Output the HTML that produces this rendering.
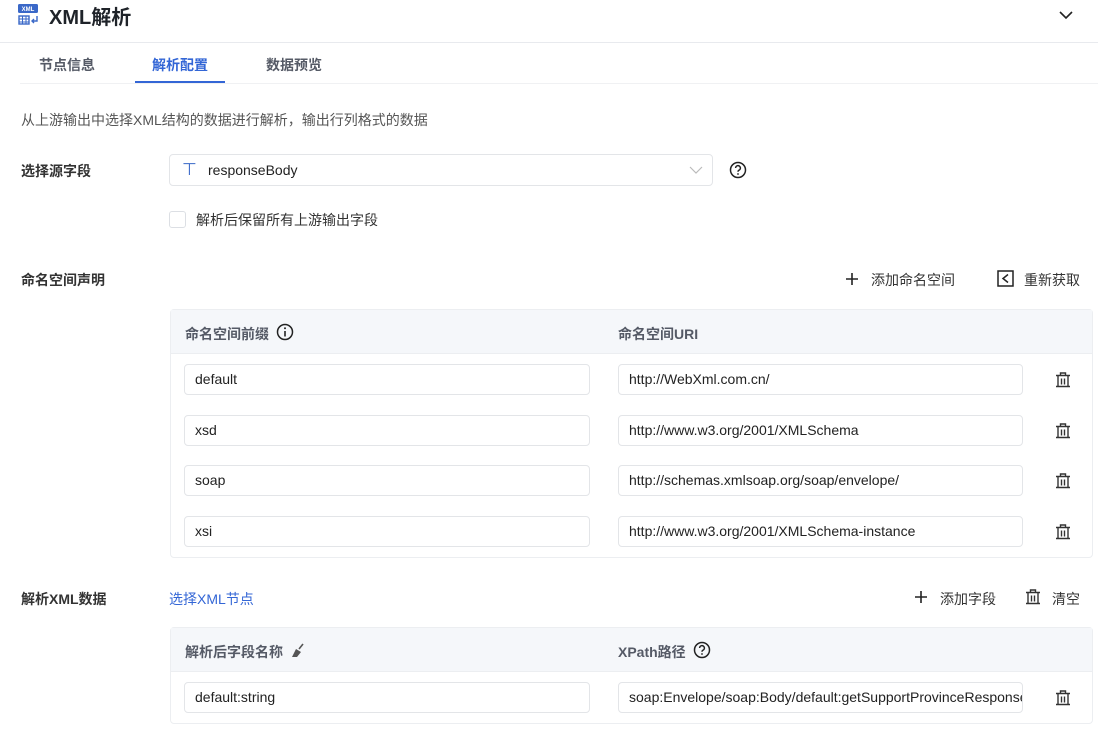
<!DOCTYPE html>
<html><head><meta charset="utf-8"><style>
*{box-sizing:border-box;margin:0;padding:0}
body{width:1098px;height:729px;overflow:hidden;background:#fff;font-family:"Liberation Sans","Noto Sans CJK SC",sans-serif;color:#1f2329;position:relative}
.a{position:absolute}
.t{font-size:14px;color:#333;white-space:nowrap}
.lbl{font-size:14px;font-weight:bold;color:#333}
.inp{position:absolute;height:31px;border:1px solid #e3e5e8;border-radius:4px;background:#fff;font-size:14px;color:#222;padding-left:10px;line-height:29px;white-space:nowrap;overflow:hidden}
.tbl{position:absolute;left:170px;width:923px;border:1px solid #eceef1;border-radius:4px}
.th{background:#f5f7fa;height:44px;border-bottom:1px solid #eceef1;position:relative}
.thl{position:absolute;top:14px;font-size:14px;font-weight:bold;color:#555a66}
</style></head><body>
<svg class="a" style="left:18px;top:4px" width="22" height="22" viewBox="0 0 22 22"><rect x="0" y="0" width="20" height="9" rx="1.5" fill="#3a68c8"/><text x="10" y="7" font-size="6" fill="#fff" text-anchor="middle" font-family="Liberation Sans" font-weight="bold">XML</text><rect x="1" y="12" width="10" height="8" fill="none" stroke="#3a68c8" stroke-width="1.4"/><path d="M1 15h10M1 18h10M4.5 12v8M8 12v8" stroke="#3a68c8" stroke-width="1"/><path d="M19 12v5h-5M16 15l-2 2 2 2" fill="none" stroke="#3a68c8" stroke-width="1.4"/></svg>
<div class="a" style="left:49px;top:1px;font-size:20px;font-weight:bold;color:#1f2329">XML解析</div>
<svg class="a" style="left:1058px;top:10px" width="16" height="10"><path d="M2 2l6 6 6-6" fill="none" stroke="#222" stroke-width="1.6"/></svg>
<div class="a" style="left:0;top:42px;width:1098px;height:1px;background:#e8eaee"></div>
<div class="a" style="left:39px;top:55px;font-size:14px;font-weight:bold;color:#555a66">节点信息</div>
<div class="a" style="left:152px;top:55px;font-size:14px;font-weight:bold;color:#3366d6">解析配置</div>
<div class="a" style="left:266px;top:55px;font-size:14px;font-weight:bold;color:#555a66">数据预览</div>
<div class="a" style="left:135px;top:81px;width:90px;height:3px;background:#3366d6"></div>
<div class="a" style="left:20px;top:83px;width:1078px;height:1px;background:#f0f1f3"></div>
<div class="a t" style="left:21px;top:110px;color:#555">从上游输出中选择XML结构的数据进行解析，输出行列格式的数据</div>
<div class="a lbl" style="left:21px;top:161px">选择源字段</div>
<div class="inp" style="left:169px;top:154px;width:544px;height:32px;line-height:30px;padding-left:38px">responseBody</div>
<div class="a" style="left:182px;top:160px;font-size:17px;color:#3a68c8">⊤</div>
<svg class="a" style="left:689px;top:166px" width="14" height="9"><path d="M1 1l6 6 6-6" fill="none" stroke="#bbb" stroke-width="1.2"/></svg>
<svg class="a" style="left:729px;top:161px" width="18" height="18" viewBox="0 0 18 18"><circle cx="9" cy="9" r="7.5" fill="none" stroke="#222" stroke-width="1.5"/><path d="M6.6 7a2.4 2.4 0 1 1 3.2 2.3c-.6.3-.8.7-.8 1.4" fill="none" stroke="#222" stroke-width="1.5"/><circle cx="9" cy="13" r=".9" fill="#222"/></svg>
<div class="a" style="left:169px;top:211px;width:17px;height:17px;border:1px solid #dcdfe4;border-radius:3px"></div>
<div class="a t" style="left:196px;top:210px">解析后保留所有上游输出字段</div>
<div class="a lbl" style="left:21px;top:270px">命名空间声明</div>
<svg class="a" style="left:845px;top:272px" width="14" height="14"><path d="M7 1v12M1 7h12" stroke="#222" stroke-width="1.6"/></svg>
<div class="a t" style="left:871px;top:270px">添加命名空间</div>
<svg class="a" style="left:997px;top:270px" width="17" height="17" viewBox="0 0 17 17"><path d="M1 1h15v15H1z" fill="none" stroke="#222" stroke-width="1.5"/><path d="M11 4.5l-5 4 5 4" fill="none" stroke="#222" stroke-width="1.5"/></svg>
<div class="a t" style="left:1024px;top:270px">重新获取</div>
<div class="tbl" style="top:309px;height:249px"><div class="th"><div class="thl" style="left:14px">命名空间前缀</div><div class="thl" style="left:447px">命名空间URI</div>
<svg class="a" style="left:105px;top:13px" width="18" height="18" viewBox="0 0 18 18"><circle cx="9" cy="9" r="7.5" fill="none" stroke="#222" stroke-width="1.5"/><path d="M9 8v5.5" stroke="#222" stroke-width="1.6"/><circle cx="9" cy="5.2" r="1" fill="#222"/></svg></div></div>
<div class="inp" style="left:184px;top:364px;width:406px">default</div><div class="inp" style="left:618px;top:364px;width:405px">http://WebXml.com.cn/</div>
<div class="inp" style="left:184px;top:415px;width:406px">xsd</div><div class="inp" style="left:618px;top:415px;width:405px">http://www.w3.org/2001/XMLSchema</div>
<div class="inp" style="left:184px;top:465px;width:406px">soap</div><div class="inp" style="left:618px;top:465px;width:405px">http://schemas.xmlsoap.org/soap/envelope/</div>
<div class="inp" style="left:184px;top:516px;width:406px">xsi</div><div class="inp" style="left:618px;top:516px;width:405px">http://www.w3.org/2001/XMLSchema-instance</div>
<svg width="0" height="0" style="position:absolute"><defs><g id="tr"><path d="M1 3.5h14M5.5 3.5V1h5v2.5M3 3.5v11h10v-11M6.5 6.5v6M9.5 6.5v6M1 14.5h14" fill="none" stroke="#333" stroke-width="1.4"/></g></defs></svg>
<svg class="a" style="left:1055px;top:372px" width="16" height="16"><use href="#tr"/></svg>
<svg class="a" style="left:1055px;top:423px" width="16" height="16"><use href="#tr"/></svg>
<svg class="a" style="left:1055px;top:473px" width="16" height="16"><use href="#tr"/></svg>
<svg class="a" style="left:1055px;top:524px" width="16" height="16"><use href="#tr"/></svg>
<div class="a lbl" style="left:21px;top:589px">解析XML数据</div>
<div class="a t" style="left:169px;top:589px;color:#3366d6">选择XML节点</div>
<svg class="a" style="left:914px;top:590px" width="14" height="14"><path d="M7 1v12M1 7h12" stroke="#222" stroke-width="1.6"/></svg>
<div class="a t" style="left:940px;top:589px">添加字段</div>
<svg class="a" style="left:1025px;top:589px" width="16" height="16"><use href="#tr"/></svg>
<div class="a t" style="left:1052px;top:589px">清空</div>
<div class="tbl" style="top:627px;height:97px"><div class="th"><div class="thl" style="left:14px">解析后字段名称</div><div class="thl" style="left:447px">XPath路径</div>
<svg class="a" style="left:120px;top:15px" width="14" height="15" viewBox="0 0 14 15"><path d="M12 1L8 6" stroke="#555" stroke-width="1.6"/><path d="M5 6l5 3-4 5H1z" fill="#555"/></svg>
<svg class="a" style="left:522px;top:13px" width="18" height="18" viewBox="0 0 18 18"><circle cx="9" cy="9" r="7.5" fill="none" stroke="#222" stroke-width="1.5"/><path d="M6.6 7a2.4 2.4 0 1 1 3.2 2.3c-.6.3-.8.7-.8 1.4" fill="none" stroke="#222" stroke-width="1.5"/><circle cx="9" cy="13" r=".9" fill="#222"/></svg></div></div>
<div class="inp" style="left:184px;top:682px;width:406px">default:string</div><div class="inp" style="left:618px;top:682px;width:405px">soap:Envelope/soap:Body/default:getSupportProvinceResponse</div>
<svg class="a" style="left:1055px;top:690px" width="16" height="16"><use href="#tr"/></svg>
</body></html>
